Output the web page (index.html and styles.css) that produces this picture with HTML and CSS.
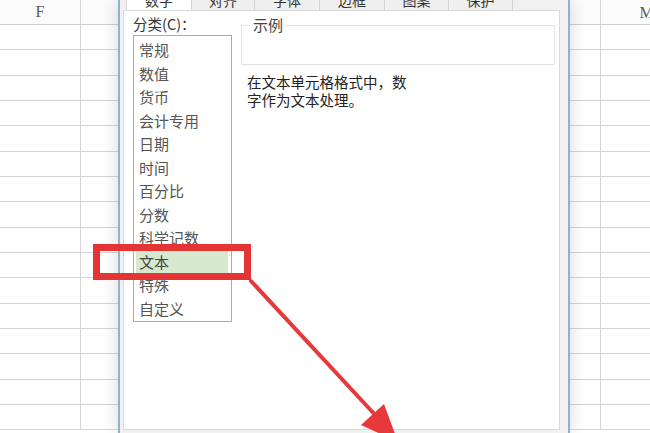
FILE: index.html
```html
<!DOCTYPE html>
<html lang="zh-CN">
<head>
<meta charset="utf-8">
<title>设置单元格格式</title>
<link rel="stylesheet" href="styles.css">
</head>
<body>
<div class="sheet sheet-left">
  <div class="row head"><div class="cell c-f">F</div><div class="cell c-g"></div></div>
  <div class="row"><div class="cell c-f"></div><div class="cell c-g"></div></div>
  <div class="row"><div class="cell c-f"></div><div class="cell c-g"></div></div>
  <div class="row"><div class="cell c-f"></div><div class="cell c-g"></div></div>
  <div class="row"><div class="cell c-f"></div><div class="cell c-g"></div></div>
  <div class="row"><div class="cell c-f"></div><div class="cell c-g"></div></div>
  <div class="row"><div class="cell c-f"></div><div class="cell c-g"></div></div>
  <div class="row"><div class="cell c-f"></div><div class="cell c-g"></div></div>
  <div class="row"><div class="cell c-f"></div><div class="cell c-g"></div></div>
  <div class="row"><div class="cell c-f"></div><div class="cell c-g"></div></div>
  <div class="row"><div class="cell c-f"></div><div class="cell c-g"></div></div>
  <div class="row"><div class="cell c-f"></div><div class="cell c-g"></div></div>
  <div class="row"><div class="cell c-f"></div><div class="cell c-g"></div></div>
  <div class="row"><div class="cell c-f"></div><div class="cell c-g"></div></div>
  <div class="row"><div class="cell c-f"></div><div class="cell c-g"></div></div>
  <div class="row"><div class="cell c-f"></div><div class="cell c-g"></div></div>
  <div class="row"><div class="cell c-f"></div><div class="cell c-g"></div></div>
</div>

<div class="dialog">
  <div class="tabs">
    <div class="tab active"><span>数字</span></div>
    <div class="tab"><span>对齐</span></div>
    <div class="tab"><span>字体</span></div>
    <div class="tab"><span>边框</span></div>
    <div class="tab"><span>图案</span></div>
    <div class="tab"><span>保护</span></div>
  </div>
  <div class="panel">
    <div class="col-left">
      <div class="label">分类(C)：</div>
      <ul class="listbox">
        <li>常规</li>
        <li>数值</li>
        <li>货币</li>
        <li>会计专用</li>
        <li>日期</li>
        <li>时间</li>
        <li>百分比</li>
        <li>分数</li>
        <li>科学记数</li>
        <li class="selected">文本</li>
        <li>特殊</li>
        <li>自定义</li>
      </ul>
    </div>
    <div class="col-right">
      <fieldset class="sample">
        <legend>示例</legend>
      </fieldset>
      <p class="desc"><span>在文本单元格格式中，数</span><span>字作为文本处理。</span></p>
    </div>
  </div>
</div>

<div class="sheet sheet-right">
  <div class="row head"><div class="cell c-l"></div><div class="cell c-m">M</div></div>
  <div class="row"><div class="cell c-l"></div><div class="cell c-m"></div></div>
  <div class="row"><div class="cell c-l"></div><div class="cell c-m"></div></div>
  <div class="row"><div class="cell c-l"></div><div class="cell c-m"></div></div>
  <div class="row"><div class="cell c-l"></div><div class="cell c-m"></div></div>
  <div class="row"><div class="cell c-l"></div><div class="cell c-m"></div></div>
  <div class="row"><div class="cell c-l"></div><div class="cell c-m"></div></div>
  <div class="row"><div class="cell c-l"></div><div class="cell c-m"></div></div>
  <div class="row"><div class="cell c-l"></div><div class="cell c-m"></div></div>
  <div class="row"><div class="cell c-l"></div><div class="cell c-m"></div></div>
  <div class="row"><div class="cell c-l"></div><div class="cell c-m"></div></div>
  <div class="row"><div class="cell c-l"></div><div class="cell c-m"></div></div>
  <div class="row"><div class="cell c-l"></div><div class="cell c-m"></div></div>
  <div class="row"><div class="cell c-l"></div><div class="cell c-m"></div></div>
  <div class="row"><div class="cell c-l"></div><div class="cell c-m"></div></div>
  <div class="row"><div class="cell c-l"></div><div class="cell c-m"></div></div>
  <div class="row"><div class="cell c-l"></div><div class="cell c-m"></div></div>
</div>

<div class="highlight-box"></div>
<svg class="arrow" width="650" height="433" viewBox="0 0 650 433">
  <line x1="251" y1="281" x2="378" y2="418" stroke="#e8393a" stroke-width="4" stroke-linecap="round"/>
  <polygon points="398,442 361,425 384,404" fill="#e8393a"/>
</svg>
</body>
</html>
```

FILE: styles.css
```css
* { box-sizing: border-box; }

html, body {
  margin: 0;
  padding: 0;
}

body {
  width: 650px;
  height: 433px;
  overflow: hidden;
  position: relative;
  display: flex;
  background: #ffffff;
  font-family: "Noto Sans CJK SC", "Noto Sans", sans-serif;
  color: #333;
}

/* spreadsheet */
.sheet {
  display: flex;
  flex-direction: column;
  overflow: hidden;
  flex: none;
}
.sheet-left { width: 118px; }
.sheet-right { width: 80px; }

.row {
  display: flex;
  height: 25.33px;
  flex: none;
  border-bottom: 1px solid #d6d6d6;
}
.row.head {
  height: 25px;
  background: #fbfbfb;
  border-bottom: 1px solid #cfcfcf;
}

.cell {
  flex: none;
  height: 100%;
  border-right: 1px solid #d6d6d6;
  font-family: "Liberation Serif", "DejaVu Serif", serif;
  font-size: 16px;
  color: #5a5a5a;
  display: flex;
  align-items: center;
  justify-content: center;
}
.c-f { width: 81px; }
.c-g { width: 60px; }
.c-l { width: 31px; }
.c-m { width: 92px; padding-top: 2px; }

/* dialog */
.dialog {
  flex: none;
  width: 452px;
  height: 433px;
  position: relative;
  z-index: 1;
  display: flex;
  flex-direction: column;
  background: #f0f0f0;
  border-left: 2px solid #8db2d2;
  border-right: 2px solid #8db2d2;
  padding: 0 8px 3px 3px;
  box-shadow: 0 0 16px rgba(0, 0, 0, 0.16);
}

.tabs {
  display: flex;
  height: 10px;
  padding-left: 3px;
  flex: none;
}
.tab {
  width: 64px;
  height: 10px;
  overflow: hidden;
  background: #efefef;
  border-right: 1px solid #d3d3d3;
  display: flex;
  justify-content: center;
  font-size: 14px;
  color: #333;
}
.tab span {
  display: block;
  line-height: 18px;
  margin-top: -9px;
}
.tab:nth-child(1) { width: 66px; }
.tab:nth-child(2) { width: 63px; }
.tab:nth-child(3) { width: 65px; }
.tab:nth-child(4) { width: 65px; }
.tab.active {
  background: #ffffff;
  border-left: 1px solid #d3d3d3;
}

.panel {
  flex: 1;
  display: flex;
  gap: 9px;
  background: #ffffff;
  border: 1px solid #dadada;
  padding: 0 4px 0 9px;
}

.col-left {
  width: 99px;
  flex: none;
  display: flex;
  flex-direction: column;
}
.label {
  font-size: 14.5px;
  line-height: 18px;
  margin-top: 4px;
  margin-bottom: 2px;
  color: #333;
}
.listbox {
  list-style: none;
  margin: 0;
  padding: 2px 2px;
  height: 287px;
  border: 1px solid #ababab;
}
.listbox li {
  height: 23.5px;
  line-height: 23.5px;
  font-size: 15px;
  padding-left: 3px;
  color: #555;
}
.listbox li.selected {
  background: #d6e8cd;
  color: #444;
  margin-right: 1px;
}

.col-right {
  flex: 1;
  display: flex;
  flex-direction: column;
}
.sample {
  margin: 5px 0 0 0;
  padding: 0;
  height: 49px;
  min-width: 0;
  border: 1px solid #e3e3e3;
}
.sample legend {
  margin-left: 8px;
  padding: 0 3px;
  font-size: 15px;
  line-height: 18px;
  color: #444;
}
.desc {
  margin: 8px 0 0 0;
  padding-left: 6px;
  font-size: 14.5px;
  line-height: 18px;
  color: #222;
}
.desc span { display: block; }

/* annotation overlays */
.highlight-box {
  position: absolute;
  left: 93px;
  top: 244px;
  width: 158px;
  height: 36px;
  border: 7px solid #e53434;
  z-index: 5;
}
.arrow {
  position: absolute;
  left: 0;
  top: 0;
  z-index: 5;
  pointer-events: none;
}
```
